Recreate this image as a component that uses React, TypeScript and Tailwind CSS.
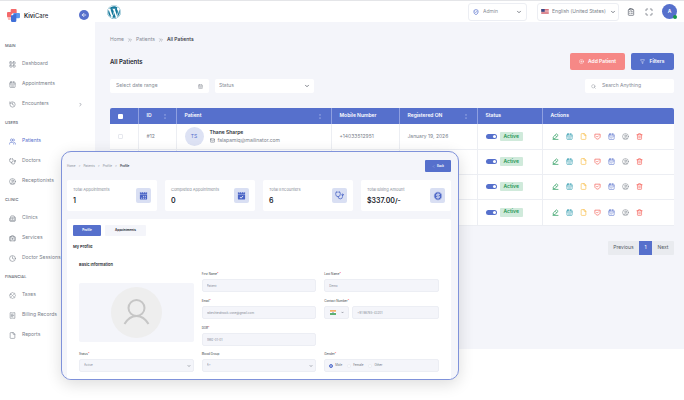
import type { ComponentType, ReactNode } from "react";
import {
  ArrowLeft,
  BadgePercent,
  BriefcaseMedical,
  Building2,
  CalendarCheck,
  CalendarDays,
  ChevronDown,
  ChevronLeft,
  ChevronRight,
  ChevronsRight,
  CircleDollarSign,
  CirclePlus,
  CircleUser,
  ClipboardList,
  Clock,
  File,
  Funnel,
  History,
  LayoutGrid,
  Mail,
  Maximize,
  ReceiptText,
  Search,
  ShieldCheck,
  Stethoscope,
  Trash2,
  Users,
} from "lucide-react";
import { FaWordpress } from "react-icons/fa";

type IconProps = { className?: string; strokeWidth?: number };
type IconType = ComponentType<IconProps>;

// pencil over a short base line
function EditIcon({ className }: IconProps) {
  return (
    <svg viewBox="0 0 24 24" className={className} fill="none" stroke="currentColor" strokeWidth="2.5" strokeLinejoin="round">
      <path d="M4 19v-5L15 3l6 5-11 11z" />
      <path d="m11 8 5 5M2 22h20" />
    </svg>
  );
}

function BadgeCheckIcon({ className }: IconProps) {
  return (
    <svg viewBox="0 0 24 24" className={className} fill="none" stroke="currentColor" strokeWidth="2.5" strokeLinejoin="round">
      <path d="M3 4h18v9c0 4-5 7-9 8-4-1-9-4-9-8z" />
      <path d="m8 11 3 3 5-5" />
    </svg>
  );
}

const sections: { title: string; items: { label: string; icon: IconType; active?: boolean; more?: boolean }[] }[] = [
  {
    title: "MAIN",
    items: [
      { label: "Dashboard", icon: LayoutGrid },
      { label: "Appointments", icon: CalendarDays },
      { label: "Encounters", icon: History, more: true },
    ],
  },
  {
    title: "USERS",
    items: [
      { label: "Patients", icon: Users, active: true },
      { label: "Doctors", icon: Stethoscope },
      { label: "Receptionists", icon: CircleUser },
    ],
  },
  {
    title: "CLINIC",
    items: [
      { label: "Clinics", icon: Building2 },
      { label: "Services", icon: BriefcaseMedical },
      { label: "Doctor Sessions", icon: Clock },
    ],
  },
  {
    title: "FINANCIAL",
    items: [
      { label: "Taxes", icon: BadgePercent },
      { label: "Billing Records", icon: ReceiptText },
      { label: "Reports", icon: File },
    ],
  },
];

const rows = [
  { id: "#12", initials: "TS", name: "Thane Sharpe", email: "falapamiq@mailinator.com", phone: "+14033512951", date: "January 19, 2026" },
  {},
  {},
  {},
];

const actions: { label: string; icon: IconType; color: string }[] = [
  { label: "Edit", icon: EditIcon, color: "text-[#2f9e62]" },
  { label: "Appointments", icon: CalendarDays, color: "text-[#2596ab]" },
  { label: "Report", icon: File, color: "text-[#f8b530]" },
  { label: "Verify", icon: BadgeCheckIcon, color: "text-[#f4685f]" },
  { label: "Book", icon: CalendarCheck, color: "text-[#5670cc]" },
  { label: "Profile", icon: CircleUser, color: "text-[#858b95]" },
  { label: "Delete", icon: Trash2, color: "text-[#f4564e]" },
];

const stats: { label: string; value: string; icon: ReactNode }[] = [
  { label: "Total Appointments", value: "1", icon: <CalendarTile /> },
  { label: "Completed Appointments", value: "0", icon: <CalendarTile done /> },
  { label: "Total Encounters", value: "6", icon: <Stethoscope className="size-[9px]" strokeWidth={2} /> },
  {
    label: "Total Billing Amount",
    value: "$337.00/-",
    icon: <CircleDollarSign className="size-[10px] fill-[#4a64c6] text-[#d9dff3]" strokeWidth={2} />,
  },
];

function CalendarTile({ done }: { done?: boolean }) {
  return (
    <svg viewBox="0 0 20 20" className="size-[9px]" fill="none">
      <path d="M2 3h16v4H2z" fill="#4a64c6" />
      <path d="M5 1v4M10 1v4M15 1v4" stroke="#d9dff3" strokeWidth="1.5" />
      <path d="M2 8h16v9a2 2 0 0 1-2 2H4a2 2 0 0 1-2-2z" fill="#4a64c6" />
      {done ? (
        <path d="m6.5 13.5 2.5 2.5 4.500-5" stroke="#fff" strokeWidth="1.8" />
      ) : (
        <path d="M9 12h2m2 0h2M5 16h2m2 0h2m2 0h2" stroke="#fff" strokeWidth="1.8" />
      )}
    </svg>
  );
}

function KiviLogo() {
  return (
    <svg viewBox="0 0 39 39" className="size-[13px]">
      <path d="M11 3a3 3 0 0 1 3-3h12a3 3 0 0 1 3 3v9H18l-6 6v7H3a3 3 0 0 1-3-3V12a3 3 0 0 1 3-3h8z" fill="#f4696b" />
      <path d="M1 24h10v9H4z" fill="#fbb9b6" />
      <path d="M19 12h17a3 3 0 0 1 3 3v9a4 4 0 0 1-4 4H19z" fill="#5a97ee" />
      <path d="M12 19c8 0 9-5 16-5v21a4 4 0 0 1-4 4h-8a4 4 0 0 1-4-4z" fill="#3f6fd8" />
    </svg>
  );
}

function UsFlag() {
  return (
    <svg viewBox="0 0 24 16" className="h-[5px] w-2">
      <path d="M0 0h24v16H0z" fill="#f5e9ec" />
      <path d="M0 1.500h24M0 6h24M0 10.500h24M0 15h24" stroke="#d0505c" strokeWidth="2.500" />
      <path d="M0 0h11v9H0z" fill="#3c4a86" />
    </svg>
  );
}

function IndiaFlag() {
  return (
    <svg viewBox="0 0 18 14" className="h-[5px] w-[6px]">
      <path d="M0 0h18v5H0z" fill="#f59a3c" />
      <path d="M0 5h18v4H0z" fill="#fff" />
      <path d="M0 9h18v5H0z" fill="#2b9a45" />
      <circle cx="9" cy="7" r="1.500" fill="#34459c" />
    </svg>
  );
}

function SortDots() {
  return (
    <svg viewBox="0 0 4 14" className="h-[5px] w-[2px] text-[#b7c2ee]">
      <path d="M2 0v5M2 9v5" stroke="currentColor" strokeWidth="2" />
    </svg>
  );
}

function Sidebar() {
  return (
    <aside className="w-[95px] shrink-0 bg-white">
      <div className="flex h-9 items-center justify-between pr-[6px] pb-2 pl-[7px]">
        <a href="#" className="flex items-center gap-1 text-[6px] text-[#22242c]">
          <KiviLogo />
          <span>
            <b className="font-semibold">Kivi</b>Care
          </span>
        </a>
        <button aria-label="Collapse menu" className="flex size-[10px] items-center justify-center rounded-full bg-[#5670cc] text-white">
          <ArrowLeft className="size-[6px]" strokeWidth={3} />
        </button>
      </div>
      <nav>
        {sections.map((section) => (
          <div key={section.title}>
            <h2 className="flex h-[17px] items-center pl-[5px] text-[4px] font-medium text-[#5f6773]">{section.title}</h2>
            {section.items.map(({ label, icon: Icon, active, more }) => (
              <a
                key={label}
                href="#"
                className={`flex h-5 items-center gap-[6px] pr-3 pl-[9px] text-[5px] whitespace-nowrap ${active ? "text-[#5670cc]" : "text-[#7a818b]"}`}
              >
                <Icon className="size-[7px] shrink-0" strokeWidth={2} />
                <span className="flex-1">{label}</span>
                {more && <ChevronRight className="size-[5px]" strokeWidth={3} />}
              </a>
            ))}
          </div>
        ))}
      </nav>
    </aside>
  );
}

function TopBar() {
  return (
    <header className="flex h-[21px] items-center justify-between bg-white pr-[7px] pl-3">
      <FaWordpress className="size-[14px] text-[#15799c]" />
      <div className="flex items-center">
        <label className="relative flex h-[18px] w-[59px] items-center rounded-[3px] border border-[#eceef3] pl-1">
          <ShieldCheck className="size-[6px] text-[#5670cc]" strokeWidth={3} />
          <select aria-label="Role" className="flex-1 appearance-none pl-1 text-[5px] text-[#8a9099]">
            <option>Admin</option>
          </select>
          <ChevronDown className="pointer-events-none absolute right-1 size-[6px] text-[#555b66]" strokeWidth={3} />
        </label>
        <label className="relative ml-[10px] flex h-[18px] w-[82px] items-center rounded-[3px] border border-[#eceef3] pl-[3px]">
          <UsFlag />
          <select aria-label="Language" className="flex-1 appearance-none pl-[3px] text-[5px] text-[#7d838c]">
            <option>English (United States)</option>
          </select>
          <ChevronDown className="pointer-events-none absolute right-[2px] size-[6px] text-[#555b66]" strokeWidth={3} />
        </label>
        <button aria-label="Records" className="ml-2 text-[#555b66]">
          <ClipboardList className="size-2" strokeWidth={2} />
        </button>
        <button aria-label="Full screen" className="ml-[10px] text-[#555b66]">
          <Maximize className="size-2" strokeWidth={2} />
        </button>
        <button className="relative ml-[9px] size-[15px] rounded-full bg-[#5670cc] text-[5px] font-semibold text-white">
          A
          <span className="absolute right-0 bottom-0 size-1 rounded-full bg-[#17964a]" />
        </button>
      </div>
    </header>
  );
}

function PatientTable() {
  const head = "border-l border-[#8fa0e0] pl-2 text-left font-semibold first:border-l-0";
  const cell = "border-l border-[#eceef3] pl-2 first:border-l-0";
  return (
    <table className="mt-[15px] w-full table-fixed overflow-hidden rounded-t-[2px] bg-white text-[5px] text-[#7a818b]">
      <colgroup>
        <col className="w-7" />
        <col className="w-[38px]" />
        <col />
        <col className="w-[68px]" />
        <col className="w-[78px]" />
        <col className="w-[65px]" />
        <col className="w-[132px]" />
      </colgroup>
      <thead>
        <tr className="h-4 bg-[#5670cc] text-white">
          <th className={head}>
            <input type="checkbox" aria-label="Select all" className="block size-[5px] appearance-none rounded-[1px] bg-white" />
          </th>
          <th className={head}>
            <div className="flex items-center justify-between pr-[10px]">ID <SortDots /></div>
          </th>
          <th className={head}>
            <div className="flex items-center justify-between pr-[10px]">Patient <SortDots /></div>
          </th>
          <th className={head}>Mobile Number</th>
          <th className={head}>
            <div className="flex items-center justify-between pr-[10px]">Registered ON <SortDots /></div>
          </th>
          <th className={head}>Status</th>
          <th className={head}>Actions</th>
        </tr>
      </thead>
      <tbody>
        {rows.map((row, i) => (
          <tr key={i} className="h-[25px] border-b border-[#eceef3] last:h-[26px]">
            <td className={cell}>
              <input type="checkbox" aria-label="Select row" className="block size-[5px] appearance-none rounded-[1px] border border-[#e6e8ee]" />
            </td>
            <td className={cell}>{row.id}</td>
            <td className={cell}>
              {row.name && (
                <div className="flex items-center gap-[6px]">
                  <span className="flex size-[19px] items-center justify-center rounded-full bg-[#dde2f4] text-[#5670cc]">{row.initials}</span>
                  <div className="leading-[8px]">
                    <p className="font-semibold text-[#2b2f38]">{row.name}</p>
                    <p className="flex items-center gap-[3px]">
                      <Mail className="size-[5px]" strokeWidth={3} />
                      {row.email}
                    </p>
                  </div>
                </div>
              )}
            </td>
            <td className={cell}>{row.phone}</td>
            <td className={cell}>{row.date}</td>
            <td className={cell}>
              <div className="flex items-center gap-[3px]">
                <label className="flex h-[5px] w-[11px] items-center justify-end rounded-full bg-[#5670cc] pr-px">
                  <input type="checkbox" role="switch" aria-label="Active" defaultChecked className="size-[3px] appearance-none rounded-full bg-white" />
                </label>
                <span className="flex h-[9px] items-center rounded-[1px] bg-[#d0eadb] px-1 font-semibold text-[#219653]">Active</span>
              </div>
            </td>
            <td className={cell}>
              <div className="flex gap-[7px] pl-px">
                {actions.map(({ label, icon: Icon, color }) => (
                  <button key={label} aria-label={label} className={color}>
                    <Icon className="size-[7px]" strokeWidth={2} />
                  </button>
                ))}
              </div>
            </td>
          </tr>
        ))}
      </tbody>
    </table>
  );
}

function PatientsPage() {
  return (
    <main className="bg-[#f4f5fa] pt-[14px] pr-[10px] pb-[94px] pl-[15px] text-[5px] text-[#858b95]">
      <nav className="flex h-2 items-center gap-[3px]">
        <a href="#">Home</a>
        <ChevronsRight className="size-[6px]" />
        <a href="#">Patients</a>
        <ChevronsRight className="size-[6px]" />
        <span className="font-medium text-[#2b2f38]">All Patients</span>
      </nav>
      <div className="mt-[9px] flex items-center justify-between">
        <h1 className="text-[6px] font-semibold text-[#22252d]">All Patients</h1>
        <div className="flex gap-[6px] font-semibold text-white">
          <button className="flex h-[17px] w-[55px] items-center justify-center gap-1 rounded-[2px] bg-[#f68886]">
            <CirclePlus className="size-[5px]" /> Add Patient
          </button>
          <button className="flex h-[17px] w-[43px] items-center justify-center gap-1 rounded-[2px] bg-[#5670cc]">
            <Funnel className="size-[5px]" /> Filters
          </button>
        </div>
      </div>
      <div className="mt-[9px] flex items-center gap-[6px]">
        <label className="flex h-[14px] w-[99px] items-center rounded-[2px] bg-white px-[6px]">
          <input aria-label="Date range" placeholder="Select date range" className="min-w-0 flex-1 placeholder:text-[#858b95]" />
          <CalendarDays className="size-[5px]" />
        </label>
        <label className="relative flex h-[14px] w-[99px] items-center rounded-[2px] bg-white">
          <select aria-label="Status" className="flex-1 appearance-none pl-1">
            <option>Status</option>
          </select>
          <ChevronDown className="pointer-events-none absolute right-1 size-[6px] text-[#555b66]" strokeWidth={3} />
        </label>
        <label className="ml-auto flex h-[14px] w-[89px] items-center gap-[6px] rounded-[2px] bg-white px-[6px]">
          <Search className="size-[5px]" />
          <input aria-label="Search" placeholder="Search Anything" className="min-w-0 flex-1 placeholder:text-[#858b95]" />
        </label>
      </div>
      <PatientTable />
      <div className="mt-[15px] flex justify-end">
        <div className="flex h-[14px] overflow-hidden rounded-[1px] bg-[#e9ebef] text-[#555b66]">
          <button className="w-[31px]">Previous</button>
          <button className="w-[13px] bg-[#5670cc] text-white">1</button>
          <button className="w-[22px]">Next</button>
        </div>
      </div>
    </main>
  );
}

const boxClass = "block h-[13px] w-full min-w-0 appearance-none rounded-[2px] border border-[#eceef4] bg-[#f4f5fa] px-1 text-[3px] text-[#858b95]";

function Field({ label, id, required, children }: { label: string; id: string; required?: boolean; children: ReactNode }) {
  return (
    <div>
      <label htmlFor={id} className="mb-px block h-2 text-[3px] leading-[8px] text-[#3a3f49]">
        {label}
        {required && <span className="text-red-500">*</span>}
      </label>
      {children}
    </div>
  );
}

function SelectBox({ id, value }: { id: string; value: string }) {
  return (
    <div className="relative flex items-center">
      <select id={id} className={boxClass}>
        <option>{value}</option>
      </select>
      <ChevronDown className="pointer-events-none absolute right-[3px] size-1 text-[#555b66]" strokeWidth={3} />
    </div>
  );
}

function ProfileForm() {
  return (
    <form className="px-3">
      <div className="grid grid-cols-3 gap-x-2">
        <div className="mb-1 flex h-[59px] items-center justify-center self-end rounded-[2px] bg-[#f4f5fa]">
          <svg viewBox="0 0 51 51" className="size-[51px]" fill="none" stroke="#c6c6c6" strokeWidth="2">
            <circle cx="25.5" cy="25.5" r="25.5" fill="#eeeeee" stroke="none" />
            <circle cx="25.5" cy="21" r="8" />
            <path d="M13.500 37c3-5 7-8 12-8s9 3 12 8" />
          </svg>
        </div>
        <div className="flex flex-col gap-[5px]">
          <Field label="First Name" id="first" required>
            <input id="first" defaultValue="Patient" className={boxClass} />
          </Field>
          <Field label="Email" id="email" required>
            <input id="email" defaultValue="rakeshtealnook-vone@gmail.com" className={boxClass} />
          </Field>
          <Field label="DOB" id="dob" required>
            <input id="dob" defaultValue="1992-01-01" className={boxClass} />
          </Field>
        </div>
        <div className="flex flex-col gap-[5px]">
          <Field label="Last Name" id="last" required>
            <input id="last" defaultValue="Demo" className={boxClass} />
          </Field>
          <Field label="Contact Number" id="phone" required>
            <div className="flex gap-[3px]">
              <button type="button" aria-label="Country code" className="flex h-[13px] w-[25px] shrink-0 items-center justify-center gap-[5px] rounded-[2px] border border-[#eceef4] bg-[#f4f5fa]">
                <IndiaFlag />
                <ChevronDown className="size-[3px] text-[#555b66]" strokeWidth={4} />
              </button>
              <input id="phone" defaultValue="+91 98765-43201" className={boxClass} />
            </div>
          </Field>
        </div>
      </div>
      <div className="mt-1 grid grid-cols-3 gap-x-2">
        <Field label="Status" id="status" required>
          <SelectBox id="status" value="Active" />
        </Field>
        <Field label="Blood Group" id="blood">
          <SelectBox id="blood" value="A+" />
        </Field>
        <Field label="Gender" id="male" required>
          <div className="flex h-[13px] items-center gap-[5px] rounded-[2px] border border-[#eceef4] bg-[#f4f5fa] px-1 text-[3px] text-[#6b717c]">
            {["Male", "Female", "Other"].map((g) => (
              <label key={g} className="flex items-center gap-[2px]">
                <input
                  type="radio"
                  name="gender"
                  id={g.toLowerCase()}
                  defaultChecked={g === "Male"}
                  className="size-1 appearance-none rounded-full border border-[#eceef3] bg-white checked:border-[#5670cc] checked:bg-[#a9b6e6]"
                />
                {g}
              </label>
            ))}
          </div>
        </Field>
      </div>
    </form>
  );
}

function ProfileWindow() {
  return (
    <section className="absolute top-[150px] left-[61px] w-[398px] overflow-hidden rounded-[10px] border border-[#7f92da] bg-[#f4f5fa] pt-2 pr-[7px] pl-[5px] shadow-[0_4px_16px_rgba(0,0,0,0.14)]">
      <div className="flex items-center justify-between">
        <nav className="flex items-center gap-[3px] text-[3px] text-[#858b95]">
          <a href="#">Home</a>
          <span>&gt;</span>
          <a href="#">Patients</a>
          <span>&gt;</span>
          <a href="#">Profile</a>
          <span>&gt;</span>
          <span className="font-semibold text-[#2b2f38]">Profile</span>
        </nav>
        <button className="flex h-3 w-[26px] items-center justify-center gap-[2px] rounded-[1px] bg-[#5670cc] text-[3px] font-semibold text-white">
          <ChevronLeft className="size-[3px]" /> Back
        </button>
      </div>
      <div className="mt-2 grid grid-cols-4 gap-2">
        {stats.map((stat) => (
          <div key={stat.label} className="flex h-[31px] items-center justify-between rounded-[2px] bg-white px-[6px]">
            <div className="whitespace-nowrap">
              <p className="text-[4px] leading-[8px] text-[#858b95]">{stat.label}</p>
              <p className="mt-[2px] text-[7px] leading-[10px] font-semibold text-[#22252d]">{stat.value}</p>
            </div>
            <span className="flex size-[15px] shrink-0 items-center justify-center rounded-[2px] bg-[#d9dff3] text-[#4a64c6]">{stat.icon}</span>
          </div>
        ))}
      </div>
      <div className="mt-2 rounded-t-[2px] bg-white pt-[6px] pb-[7px]">
        <div className="flex gap-1 px-[6px] text-[3px] font-bold">
          <button className="h-[11px] w-7 rounded-[1px] bg-[#5670cc] text-white">Profile</button>
          <button className="h-[11px] w-[41px] rounded-[1px] bg-[#f4f5fa] text-[#2b2f38]">Appointments</button>
        </div>
        <h2 className="mt-[7px] px-[6px] text-[4px] leading-[8px] font-semibold text-[#22252d]">My Profile</h2>
        <h3 className="mt-[10px] mb-px px-3 text-[4px] leading-[8px] font-semibold text-[#22252d]">Basic Information</h3>
        <ProfileForm />
      </div>
    </section>
  );
}

function App() {
  return (
    <div className="relative min-h-screen overflow-hidden border-t border-[#e4e5e8] bg-white font-['Inter',sans-serif]">
      <div className="flex items-start">
        <Sidebar />
        <div className="min-w-0 flex-1">
          <TopBar />
          <PatientsPage />
        </div>
      </div>
      <ProfileWindow />
    </div>
  );
}

export default App;
